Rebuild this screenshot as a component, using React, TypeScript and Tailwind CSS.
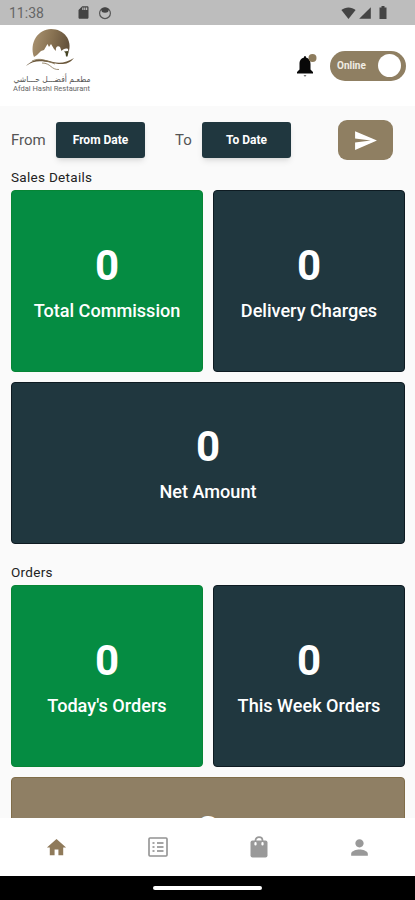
import {
  MdHome,
  MdPerson,
  MdSdCard,
  MdSend,
  MdSignalCellular4Bar,
} from "react-icons/md";

const StatCard = ({
  value,
  label,
  styles,
}: {
  value: string;
  label?: string;
  styles: string;
}) => {
  return (
    <div
      className={`flex flex-col items-center rounded-[4px] border text-white ${styles}`}
    >
      <p className="text-[42px] leading-[49px] font-bold">{value}</p>
      {label && (
        <p className="mt-[10px] text-[18.1px] leading-[22px] font-medium">
          {label}
        </p>
      )}
    </div>
  );
};

const StatusBar = () => {
  return (
    <div className="flex h-[25px] shrink-0 items-center bg-[#bdbdbd] pl-[9px] pr-[24px] text-[#444]">
      <p className="w-[67px] pt-[1px] text-[14px] leading-none text-[#666]">
        11:38
      </p>
      <MdSdCard className="h-[15px] w-[15px]" />
      <svg viewBox="0 0 14 14" className="ml-[7px] h-[14px] w-[14px]">
        <circle cx="7" cy="7.2" r="5.4" fill="none" stroke="#555" strokeWidth="1.2" />
        <path d="M3 3.5C4 .8 10 .8 11 3.500L10 6C8.500 7 5.500 7 4 6Z" fill="#444" />
      </svg>
      <div className="ml-auto flex items-center">
        <svg viewBox="0 0 15 12" className="h-[12px] w-[15px]" fill="#444">
          <path d="M.4 3C4.5-.5 10.500-.5 14.600 3L7.500 12Z" />
        </svg>
        <MdSignalCellular4Bar className="ml-[2px] h-[14px] w-[14px]" />
        <svg viewBox="0 0 8 13" className="ml-[7px] mr-[4px] h-[13px] w-[8px]" fill="#444">
          <path d="M2.500 0H5.500V1.500H7.500V13H.5V1.500H2.500Z" />
        </svg>
      </div>
    </div>
  );
};

const Logo = () => {
  return (
    <svg viewBox="0 0 84 68" className="h-[68px] w-[84px]">
      <defs>
        <linearGradient id="sun" x1="0" y1="0.3" x2="1" y2="0.5">
          <stop offset="0" stopColor="#a99270" />
          <stop offset="0.5" stopColor="#887252" />
          <stop offset="1" stopColor="#62503a" />
        </linearGradient>
      </defs>
      <path
        d="M22 29C17 15 26 1 39 1C52 1 61 12 56.500 25L56 21C54 20 51 21 49.500 23L48 19C46 17 43 19 44 23L42 21L39 16L37 19L35.500 16L32 22L29 23L25 27Z"
        fill="url(#sun)"
      />
      <path d="M52 23.500L56 23L56.500 24L55.500 28.500H54L53.500 25Z" fill="#454426" />
      <path
        d="M14 38C23 29 31 31 41 34C49 36 55 34 62 30C56 38 47 36.500 38 34.500C29 32.500 22 32 14 38Z"
        fill="#6b583c"
      />
      <path
        d="M20 33C28 29 35 33 43 36M30 35C39 35 39 42 47 41.500"
        fill="none"
        stroke="#857354"
        strokeWidth="0.8"
      />
      <text
        x="40"
        y="53.5"
        textAnchor="middle"
        textLength="77"
        lengthAdjust="spacingAndGlyphs"
        fontSize="8.5"
        fill="#555"
        fontFamily="'DejaVu Sans', sans-serif"
      >
        مطعـم أفضـــل حـــاشي
      </text>
      <text
        x="1"
        y="62.5"
        textLength="77"
        lengthAdjust="spacingAndGlyphs"
        fontSize="7"
        fill="#666"
        fontFamily="Roboto, sans-serif"
      >
        Afdal Hashi Restaurant
      </text>
    </svg>
  );
};

const Header = () => {
  return (
    <header className="flex h-[81px] shrink-0 items-center bg-white pl-[12px] pr-[9px]">
      <div className="-mt-[8px]">
        <Logo />
      </div>
      <svg viewBox="0 0 22 24" className="ml-auto h-[24px] w-[22px]">
        <path
          d="M9 3.500C9 1.500 11 1.500 11 3.500C14.500 4.500 15.500 7 15.500 10V15.500L18 18V19.500H2V18L4.500 15.500V10C4.500 7 5.500 4.500 9 3.500Z"
          fill="#080808"
        />
        <path d="M8.500 21H11.500L10 23Z" fill="#777" />
        <circle cx="17.500" cy="4" r="4" fill="#8d7c5d" />
      </svg>
      <button className="ml-[13px] flex h-[30px] w-[76px] items-center justify-between rounded-full bg-[#8f7f62] pl-[7px] pr-[5px] text-[10px] font-bold text-[#f1ede4]">
        Online
        <span className="h-[23px] w-[23px] rounded-full bg-white"></span>
      </button>
    </header>
  );
};

const App = () => {
  return (
    <div className="flex h-[900px] w-[415px] flex-col overflow-hidden bg-[#fafafa] font-[Roboto,sans-serif]">
      <StatusBar />
      <Header />
      <main className="flex-1 overflow-hidden pl-[11px] pr-[10px] pt-[14px]">
        <div className="flex h-[40px] items-center text-[15px] text-[#555]">
          <p className="w-[45px]">From</p>
          <button className="h-[36px] w-[89px] rounded-[3px] bg-[#20373f] text-[12px] font-bold text-white shadow-md">
            From Date
          </button>
          <p className="ml-[30px] w-[27px]">To</p>
          <button className="h-[36px] w-[89px] rounded-[3px] bg-[#20373f] text-[12px] font-bold text-white shadow-md">
            To Date
          </button>
          <button className="ml-[47px] flex h-[40px] w-[55px] items-center justify-center rounded-[9px] bg-[#8f7f62] text-white">
            <MdSend className="h-[25px] w-[25px]" />
          </button>
        </div>

        <h2 className="mt-[8px] h-[22px] text-[13.5px] leading-[18px] tracking-[0.3px] text-[#222]">
          Sales Details
        </h2>
        <div className="grid grid-cols-2 gap-[10px]">
          <StatCard
            value="0"
            label="Total Commission"
            styles="h-[182px] pt-[50px] bg-[#058c42] border-[#078535]"
          />
          <StatCard
            value="0"
            label="Delivery Charges"
            styles="h-[182px] pt-[50px] bg-[#20373f] border-[#0e1b22]"
          />
          <StatCard
            value="0"
            label="Net Amount"
            styles="col-span-2 h-[162px] pt-[39px] bg-[#20373f] border-[#0e1b22]"
          />
        </div>

        <h2 className="mt-[19px] h-[22px] text-[13.5px] leading-[18px] tracking-[0.3px] text-[#222]">
          Orders
        </h2>
        <div className="grid grid-cols-2 gap-[10px]">
          <StatCard
            value="0"
            label="Today's Orders"
            styles="h-[182px] pt-[50px] bg-[#058c42] border-[#078535]"
          />
          <StatCard
            value="0"
            label="This Week Orders"
            styles="h-[182px] pt-[50px] bg-[#20373f] border-[#0e1b22]"
          />
          <StatCard
            value="0"
            styles="col-span-2 h-[142px] pt-[29px] bg-[#8f7f64] border-[#806d49]"
          />
        </div>
      </main>

      <nav className="grid h-[58px] shrink-0 grid-cols-4 items-center justify-items-center bg-white pl-[6px] pr-[5px] text-[#999]">
        <MdHome className="h-[23px] w-[23px] text-[#8f7a5a]" />
        <svg viewBox="0 0 20 20" className="h-[20px] w-[20px]">
          <rect x="1" y="1" width="18" height="18" rx="1" fill="none" stroke="#929292" strokeWidth="1.600" />
          <path d="M4.500 6H6.500M4.500 10H6.500M4.500 14H6.500M9 6H15.500M9 10H15.500M9 14H15.500" stroke="#888" strokeWidth="1.600" />
        </svg>
        <svg viewBox="0 0 18 22" className="h-[22px] w-[18px]">
          <path d="M5.500 6V4.500C5.500 0 12.500 0 12.500 4.500V6" fill="none" stroke="#999" strokeWidth="1.800" />
          <rect x="0.500" y="4.500" width="17" height="17" rx="2" fill="#999" />
          <path d="M5.500 7V8.500M12.500 7V8.500" stroke="#fff" strokeWidth="2.200" strokeLinecap="round" />
        </svg>
        <MdPerson className="h-[25px] w-[25px]" />
      </nav>
      <div className="flex h-[24px] shrink-0 items-center justify-center bg-black">
        <div className="h-[4px] w-[109px] rounded-full bg-white"></div>
      </div>
    </div>
  );
};

export default App;
